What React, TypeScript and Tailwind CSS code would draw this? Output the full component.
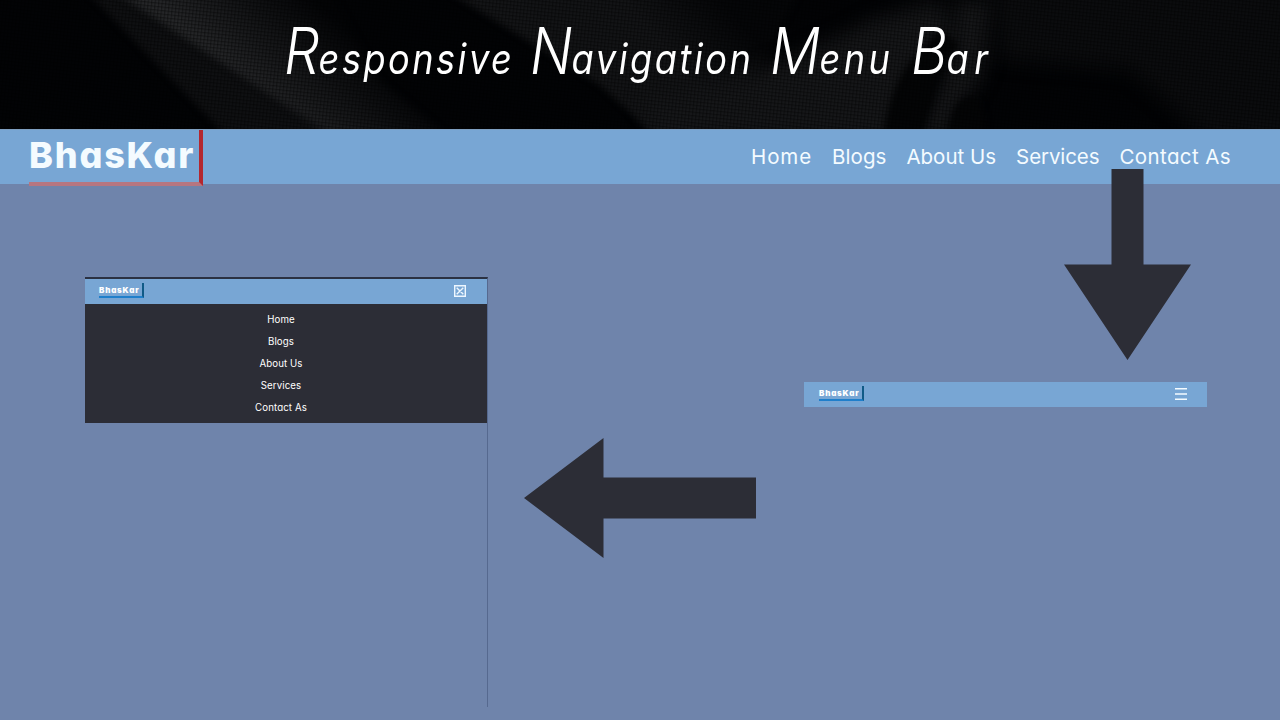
const LINKS = [
  { label: 'Home', tracking: 'tracking-[0.9px]' },
  { label: 'Blogs', tracking: 'tracking-[0.05px]' },
  { label: 'About Us', tracking: 'tracking-[0px]' },
  { label: 'Services', tracking: 'tracking-[-0.1px]' },
  { label: 'Contact As', tracking: 'tracking-[0.4px]' },
];

const TITLE = [
  { word: 'Responsive', width: 'w-[246px]', tracking: 'tracking-[2.9px]' },
  { word: 'Navigation', width: 'w-[240px]', tracking: 'tracking-[3px]' },
  { word: 'Menu', width: 'w-[141px]', tracking: 'tracking-[4px]' },
  { word: 'Bar', width: 'w-[100px]', tracking: 'tracking-[6.5px]' },
];

function Fabric() {
  return (
    <svg className="absolute inset-0 h-full w-full" viewBox="0 0 1280 129" preserveAspectRatio="none" aria-hidden="true">
      <defs>
        <filter id="soft" x="-20%" y="-20%" width="140%" height="140%" colorInterpolationFilters="sRGB">
          <feGaussianBlur stdDeviation="9" />
        </filter>
        <filter id="edge" x="-20%" y="-20%" width="140%" height="140%" colorInterpolationFilters="sRGB">
          <feGaussianBlur stdDeviation="3" />
        </filter>
        <pattern id="weave" width="3.500" height="3.500" patternUnits="userSpaceOnUse" patternTransform="rotate(6)">
          <rect width="3.500" height="1.200" fill="#000" opacity="0.35" />
          <rect width="1.200" height="3.500" fill="#000" opacity="0.35" />
        </pattern>
        <linearGradient id="ridge" gradientUnits="userSpaceOnUse" x1="225" y1="65" x2="300" y2="-15">
          <stop offset="0" stopColor="#252628" />
          <stop offset="0.4" stopColor="#17181a" />
          <stop offset="1" stopColor="#030406" />
        </linearGradient>
        <linearGradient id="ridge2" gradientUnits="userSpaceOnUse" x1="530" y1="60" x2="670" y2="-60">
          <stop offset="0" stopColor="#141517" />
          <stop offset="0.6" stopColor="#131416" />
          <stop offset="1" stopColor="#050608" />
        </linearGradient>
      </defs>
      <rect width="1280" height="129" fill="#020305" />
      <path d="M85 -10H145L340 140H230Z" fill="#0f1012" filter="url(#edge)" />
      <path d="M112 -10H330L380 80L460 145H345Z" fill="url(#ridge)" filter="url(#edge)" />
      <path d="M445 -10H800L760 70L680 140H660L600 85Z" fill="url(#ridge2)" filter="url(#edge)" />
      <path d="M640 100Q780 70 870 20L940 0L960 40L915 70L895 140H660Z" fill="#161719" filter="url(#soft)" />
      <path d="M955 0H995L985 70L945 140H915L950 60Z" fill="#161719" filter="url(#soft)" />
      <path d="M912 60Q888 90 883 140H920L945 60L960 45L940 30Z" fill="#040506" filter="url(#edge)" />
      <path d="M948 140Q950 98 970 96Q988 100 986 140Z" fill="#040506" filter="url(#edge)" />
      <path d="M990 -30H1320V160H1230L1130 70L1000 60Z" fill="#0b0c0e" filter="url(#soft)" />
      <rect width="1280" height="129" fill="url(#weave)" />
    </svg>
  );
}

function MiniLogo() {
  return (
    <div className="relative -top-px flex h-[15px] w-[45px] items-center border-r-2 border-b-2 border-r-[#105a86] border-b-[#1f7fcb] text-[8px] leading-none font-black tracking-[0.8px] text-white">
      BhasKar
    </div>
  );
}

export default function App() {
  return (
    <div className="flex h-[720px] w-[1280px] flex-col overflow-hidden bg-[#6f84ab] font-['Inter',sans-serif] [font-feature-settings:'cv11']">
      <header className="relative h-[129px] shrink-0 overflow-hidden bg-[#020305]">
        <Fabric />
        <h1 className="relative flex h-[83px] items-end pl-[284px] text-[42px] leading-none font-normal text-white italic">
          {TITLE.map((t) => (
            <span key={t.word} className={t.width}>
              <span className={`block origin-left scale-x-[0.86] whitespace-nowrap first-letter:text-[65px] first-letter:font-light first-letter:tracking-[-1px] ${t.tracking}`}>
                {t.word}
              </span>
            </span>
          ))}
        </h1>
      </header>

      <nav className="flex h-[55px] shrink-0 items-start justify-between border-t border-[#7f9fc1] bg-[#78a6d4] pr-[49px] pl-[29px] text-[#f4fbff]">
        <div className="h-[56px] w-[174px] border-r-4 border-b-4 border-r-[#b3272f] border-b-[#b67680] pt-[3px] text-[36px] leading-[44px] font-extrabold tracking-[1.8px]">
          BhasKar
        </div>
        <ul className="flex gap-[20px] text-[20.5px] leading-[54px]">
          {LINKS.map((l) => (
            <li key={l.label} className={l.tracking}>{l.label}</li>
          ))}
        </ul>
      </nav>

      <main className="flex flex-1 items-start pl-[85px]">
        <section className="mt-[93px] h-[430px] w-[403px] shrink-0 border-t-2 border-r border-t-[#2b3142] border-r-[#56698f]">
          <div className="flex h-[25px] items-center justify-between bg-[#78a6d4] pr-[21px] pl-[14px]">
            <MiniLogo />
            <svg className="mb-[2px] h-[12px] w-[12px]" viewBox="0 0 12 12" fill="none" stroke="#eef7ff" strokeWidth="1.4">
              <path d="M.7.7h10.6v10.6H.7ZM2.7 2.7l6.6 6.6M9.3 2.7l-6.6 6.6" />
            </svg>
          </div>
          <ul className="flex h-[119px] flex-col bg-[#2c2d36] pt-[4.500px] text-center text-[9.7px] leading-[22.2px] tracking-[0.1px] text-white">
            {LINKS.map((l) => (
              <li key={l.label} className="pr-[10px]">{l.label}</li>
            ))}
          </ul>
        </section>

        <svg className="mt-[254px] ml-[36px] h-[120px] w-[232px] shrink-0" viewBox="0 0 232 120">
          <path d="M0 60 79.500 0V39.500H232V80.500H79.500V120Z" fill="#2c2d36" />
        </svg>

        <section className="-mt-[15px] ml-[48px] flex w-[403px] shrink-0 flex-col">
          <svg className="ml-[260px] h-[191px] w-[127px]" viewBox="0 0 127 191">
            <path d="M47.500 0H79.500V95.500H127L63.500 191 0 95.500H47.500Z" fill="#2c2d36" />
          </svg>
          <div className="mt-[22px] flex h-[25px] items-center justify-between bg-[#78a6d4] pr-[20px] pl-[15px]">
            <MiniLogo />
            <svg className="mb-px h-[12px] w-[12px]" viewBox="0 0 12 12" stroke="#f4fbff" strokeWidth="1.5">
              <path d="M0 .8h12M0 6h12M0 11.200h12" />
            </svg>
          </div>
        </section>
      </main>
    </div>
  );
}
